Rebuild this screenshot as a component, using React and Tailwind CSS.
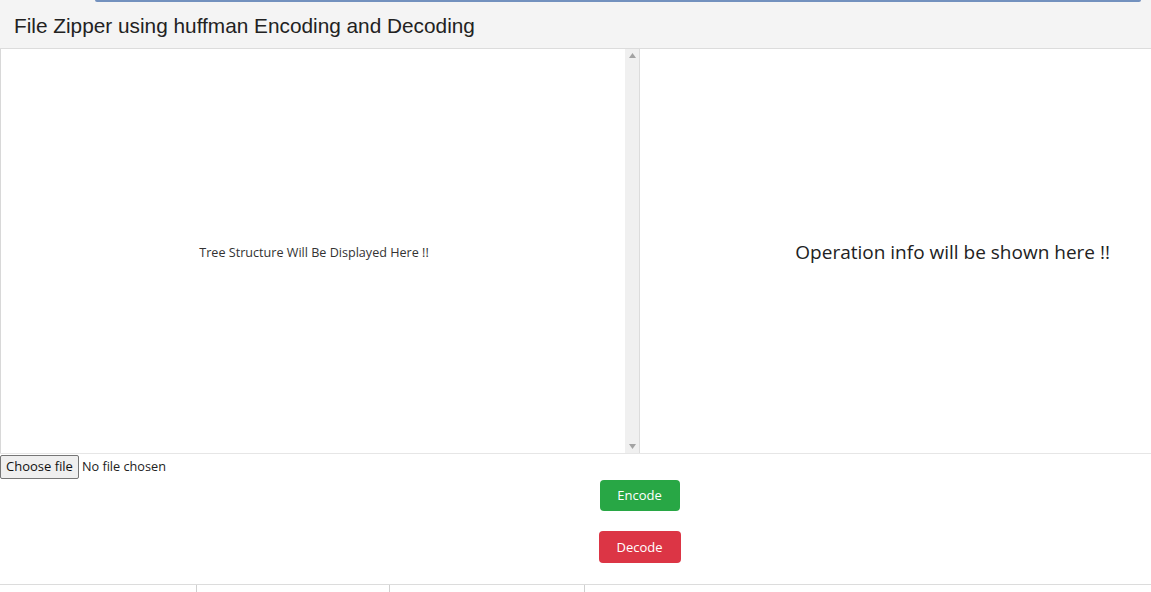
const App = () => {
  return (
    <div className="w-[1151px] h-[592px] overflow-hidden bg-white" style={{ fontFamily: '"Open Sans", "Noto Sans", sans-serif' }}>
      <header className="h-[49px] bg-[#f4f4f4] border-b border-[#dcdcdc] flex flex-col">
        <div className="h-[2px] ml-[95px] mr-[10px] bg-[#7391be] rounded-b" />
        <h1 className="pl-[14px] pt-[14px] text-[20.8px] leading-none text-[#222]" style={{ fontFamily: '"Liberation Sans", Arial, sans-serif' }}>
          File Zipper using huffman Encoding and Decoding
        </h1>
      </header>

      <div className="flex h-[405px] border-b border-[#e6e6e6]">
        <div className="w-[640px] flex border-l border-[#d8d8d8] border-r border-r-[#dcdcdc]">
          <div className="flex-1 flex items-center justify-center pt-[4px] pl-[2px] text-[12.6px] text-[#333]">
            Tree Structure Will Be Displayed Here !!
          </div>
          <div className="w-[14px] bg-[#f0f0f0] flex flex-col items-center justify-between py-[4px]">
            <svg width="7" height="5" viewBox="0 0 7 5"><path d="M3.5 0L7 5H0z" fill="#a3a3a3" /></svg>
            <svg width="7" height="5" viewBox="0 0 7 5"><path d="M0 0h7L3.5 5z" fill="#a3a3a3" /></svg>
          </div>
        </div>
        <div className="flex-1 flex items-center justify-end pt-[2px] pr-[41px] text-[19px] text-[#222]">
          Operation info will be shown here !!
        </div>
      </div>

      <div className="flex items-center h-[25px] text-[12.7px] text-[#222]">
        <button className="h-[24px] px-[5px] border border-[#767676] rounded-[2px] bg-[#efefef] text-[13px] text-[#111]">
          Choose file
        </button>
        <span className="ml-[3px]">No file chosen</span>
      </div>

      <div className="flex flex-col items-center pl-[128px]">
        <button className="mt-[1px] w-[80px] h-[31px] rounded-[4px] bg-[#28a745] text-white text-[13px]">Encode</button>
        <button className="mt-[20px] w-[82px] h-[32px] pt-[2px] rounded-[4px] bg-[#dc3545] text-white text-[13px]">Decode</button>
      </div>

      <div className="mt-[21px] border-t border-[#dcdcdc] flex">
        <div className="w-[197px] h-[7px] border-r border-[#d0d0d0]" />
        <div className="w-[193px] h-[7px] border-r border-[#d0d0d0]" />
        <div className="w-[195px] h-[7px] border-r border-[#d0d0d0]" />
      </div>
    </div>
  );
};

export default App;
